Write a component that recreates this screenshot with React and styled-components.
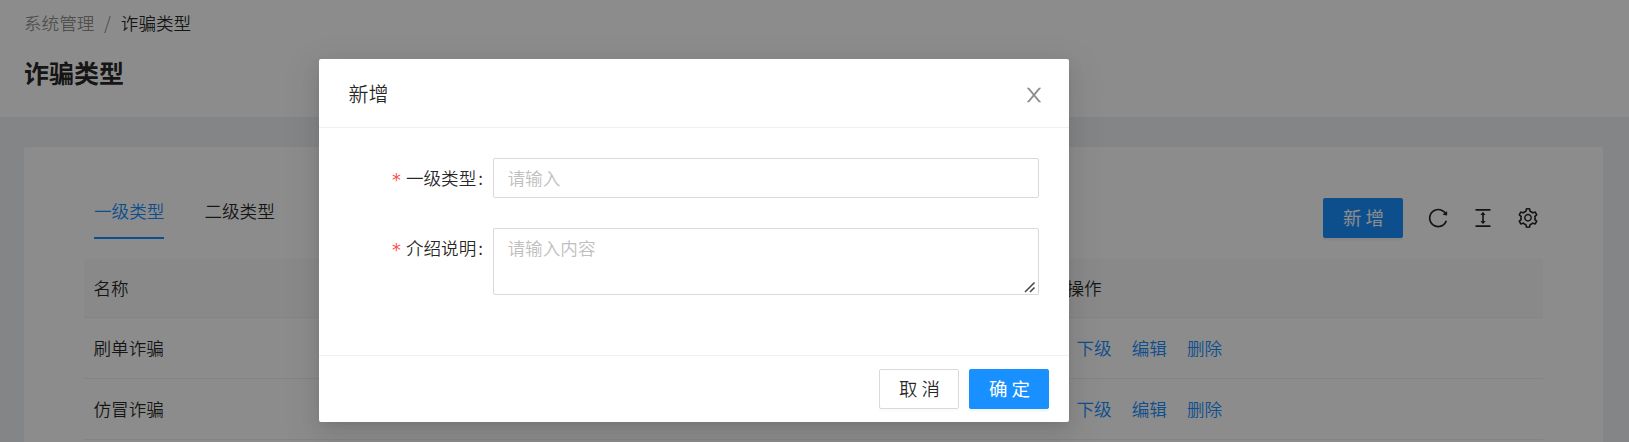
import React from "react";
import styled, { createGlobalStyle } from "styled-components";
import {
  AiOutlineColumnHeight,
  AiOutlineReload,
  AiOutlineSetting,
} from "react-icons/ai";

const GlobalStyle = createGlobalStyle`
  *, *::before, *::after { box-sizing: border-box; }
  html, body { margin: 0; height: 100%; overflow: hidden; }
  body, button, input, textarea {
    font-family: "Noto Sans CJK SC", sans-serif;
    font-size: 17.6px;
    font-weight: 350;
    line-height: 27.5px;
    color: rgba(0, 0, 0, 0.85);
  }
`;

const Page = styled.div`
  position: relative;
  height: 442px;
  overflow: hidden;
  background: #f0f2f5;
`;

const PageHeader = styled.header`
  height: 117px;
  padding: 9px 24px 0;
  background: #fff;
`;

const Breadcrumb = styled.nav`
  display: flex;
  color: rgba(0, 0, 0, 0.45);
`;

const Separator = styled.span`
  margin: 0 10px 0 9.5px;
`;

const Current = styled.span`
  color: rgba(0, 0, 0, 0.85);
`;

const PageTitle = styled.h1`
  margin: 15px 0 0;
  font-size: 25px;
  line-height: 40px;
  font-weight: 700;
`;

const Card = styled.main`
  margin: 30px 26px 0 24px;
  height: 320px;
  padding: 38px 60px 0;
  background: #fff;
  border-radius: 2px;
`;

const Toolbar = styled.div`
  display: flex;
  justify-content: space-between;
  height: 74px;
  padding: 0 5px 0 10px;
`;

const Tabs = styled.div`
  display: flex;
  gap: 40px;
`;

const Tab = styled.div`
  height: 54px;
  padding-top: 12px;
  color: ${(p) => (p.$active ? "#1890ff" : "inherit")};
  border-bottom: 2px solid ${(p) => (p.$active ? "#1890ff" : "transparent")};
`;

const Actions = styled.div`
  display: flex;
  align-items: center;
  gap: 25px;
  height: 40px;
  margin-top: 13px;

  svg {
    display: block;
    font-size: 20px;
  }
`;

const Button = styled.button`
  width: 80px;
  height: 40px;
  padding: 0 0 0 5px;
  font-size: 18.5px;
  font-weight: ${(p) => (p.$primary ? 400 : 350)};
  letter-spacing: 4px;
  white-space: nowrap;
  border-radius: 2px;
  border: 1px solid ${(p) => (p.$primary ? "#1890ff" : "#d9d9d9")};
  background: ${(p) => (p.$primary ? "#1890ff" : "#fff")};
  color: ${(p) => (p.$primary ? "#fff" : "rgba(0, 0, 0, 0.85)")};
  box-shadow: 0 2.5px 0 rgba(0, 0, 0, ${(p) => (p.$primary ? 0.045 : 0.015)});
`;

const Row = styled.div`
  display: grid;
  grid-template-columns: 973px 1fr;
  align-items: center;
  height: ${(p) => (p.$head ? 59 : 61)}px;
  padding: 0 10px 0 9.5px;
  background: ${(p) => (p.$head ? "#fafafa" : "#fff")};
  border-bottom: 1px solid #f0f0f0;
`;

const Links = styled.div`
  display: flex;
  gap: 20px;
  padding-left: 10px;
  color: #1890ff;
`;

const Mask = styled.div`
  position: absolute;
  inset: 0;
  background: rgba(0, 0, 0, 0.45);
`;

const Modal = styled.section`
  position: absolute;
  top: 59px;
  left: 319px;
  width: 750px;
  height: 363px;
  display: flex;
  flex-direction: column;
  background: #fff;
  border-radius: 2px;
  box-shadow:
    0 4px 8px -5px rgba(0, 0, 0, 0.12),
    0 8px 20px rgba(0, 0, 0, 0.08),
    0 11px 35px 10px rgba(0, 0, 0, 0.05);
`;

const ModalHeader = styled.header`
  display: flex;
  align-items: center;
  justify-content: space-between;
  height: 69px;
  padding: 2px 25px 0 29.5px;
  font-size: 20px;
  border-bottom: 1px solid #f0f0f0;

  svg {
    display: block;
    margin-top: 2px;
    color: rgba(0, 0, 0, 0.45);
  }
`;

const Form = styled.div`
  flex: 1;
  display: flex;
  flex-direction: column;
  gap: 30px;
  padding: 30px;
`;

const Field = styled.label`
  display: grid;
  grid-template-columns: 144px 546px;
  align-items: start;
`;

const Label = styled.span`
  display: flex;
  justify-content: flex-end;
  padding: 6px 10px 0 0;
`;

const Required = styled.span`
  margin-right: 5px;
  padding-top: 3px;
  font-family: "DejaVu Sans", sans-serif;
  font-weight: 400;
  color: #ff4d4f;
`;

const Colon = styled.span`
  margin-left: 2px;
`;

const Control = styled.input`
  display: block;
  width: 100%;
  height: ${(p) => p.$height}px;
  padding: ${(p) => p.$top}px 14px ${(p) => 10 - p.$top}px 13.5px;
  border: 1px solid #d9d9d9;
  border-radius: 2px;
  background: #fff;
  outline: none;
  resize: none;

  &::placeholder {
    color: #bfbfbf;
    opacity: 1;
  }
`;

const AreaWrap = styled.span`
  position: relative;
`;

const Grip = styled.svg`
  position: absolute;
  right: 3px;
  bottom: 2px;
`;

const ModalFooter = styled.footer`
  display: flex;
  justify-content: flex-end;
  gap: 10px;
  height: 67px;
  padding: 13px 20px 0;
  border-top: 1px solid #f0f0f0;
`;

const rows = ["刷单诈骗", "仿冒诈骗"];

const ICON_BOX = "64 64 896 896";

function CloseIcon() {
  return (
    <svg width="20" height="20" viewBox={ICON_BOX} fill="currentColor">
      <path d="M563.8 512l262.5-312.9c4.4-5.2.7-13.1-6.1-13.1h-79.8c-4.7 0-9.2 2.1-12.3 5.7L511.6 449.8 295.1 191.7c-3-3.6-7.5-5.7-12.3-5.7H203c-6.8 0-10.5 7.9-6.1 13.1L459.4 512 196.9 824.9A7.95 7.95 0 0 0 203 838h79.8c4.7 0 9.2-2.1 12.3-5.7l216.5-258.1 216.5 258.1c3 3.6 7.5 5.7 12.3 5.7h79.8c6.8 0 10.5-7.9 6.1-13.1L563.8 512z" />
    </svg>
  );
}

function FieldLabel({ children }) {
  return (
    <Label>
      <Required>*</Required>
      {children}
      <Colon>:</Colon>
    </Label>
  );
}

export default function App() {
  return (
    <Page>
      <GlobalStyle />
      <PageHeader>
        <Breadcrumb>
          <span>系统管理</span>
          <Separator>/</Separator>
          <Current>诈骗类型</Current>
        </Breadcrumb>
        <PageTitle>诈骗类型</PageTitle>
      </PageHeader>
      <Card>
        <Toolbar>
          <Tabs>
            <Tab $active>一级类型</Tab>
            <Tab>二级类型</Tab>
          </Tabs>
          <Actions>
            <Button $primary>新增</Button>
            <AiOutlineReload viewBox={ICON_BOX} />
            <AiOutlineColumnHeight viewBox={ICON_BOX} />
            <AiOutlineSetting viewBox={ICON_BOX} />
          </Actions>
        </Toolbar>
        <Row $head>
          <span>名称</span>
          <span>操作</span>
        </Row>
        {rows.map((name) => (
          <Row key={name}>
            <span>{name}</span>
            <Links>
              <span>下级</span>
              <span>编辑</span>
              <span>删除</span>
            </Links>
          </Row>
        ))}
      </Card>
      <Mask />
      <Modal>
        <ModalHeader>
          <span>新增</span>
          <CloseIcon />
        </ModalHeader>
        <Form>
          <Field>
            <FieldLabel>一级类型</FieldLabel>
            <Control $height={40} $top={4} placeholder="请输入" />
          </Field>
          <Field>
            <FieldLabel>介绍说明</FieldLabel>
            <AreaWrap>
              <Control as="textarea" $height={67} $top={5} placeholder="请输入内容" />
              <Grip width="12" height="12" viewBox="0 0 12 12" stroke="#444" strokeWidth="1.5">
                <path d="M1 11L10.5 1.5M6 11L10.5 6.5" />
              </Grip>
            </AreaWrap>
          </Field>
        </Form>
        <ModalFooter>
          <Button>取消</Button>
          <Button $primary>确定</Button>
        </ModalFooter>
      </Modal>
    </Page>
  );
}
